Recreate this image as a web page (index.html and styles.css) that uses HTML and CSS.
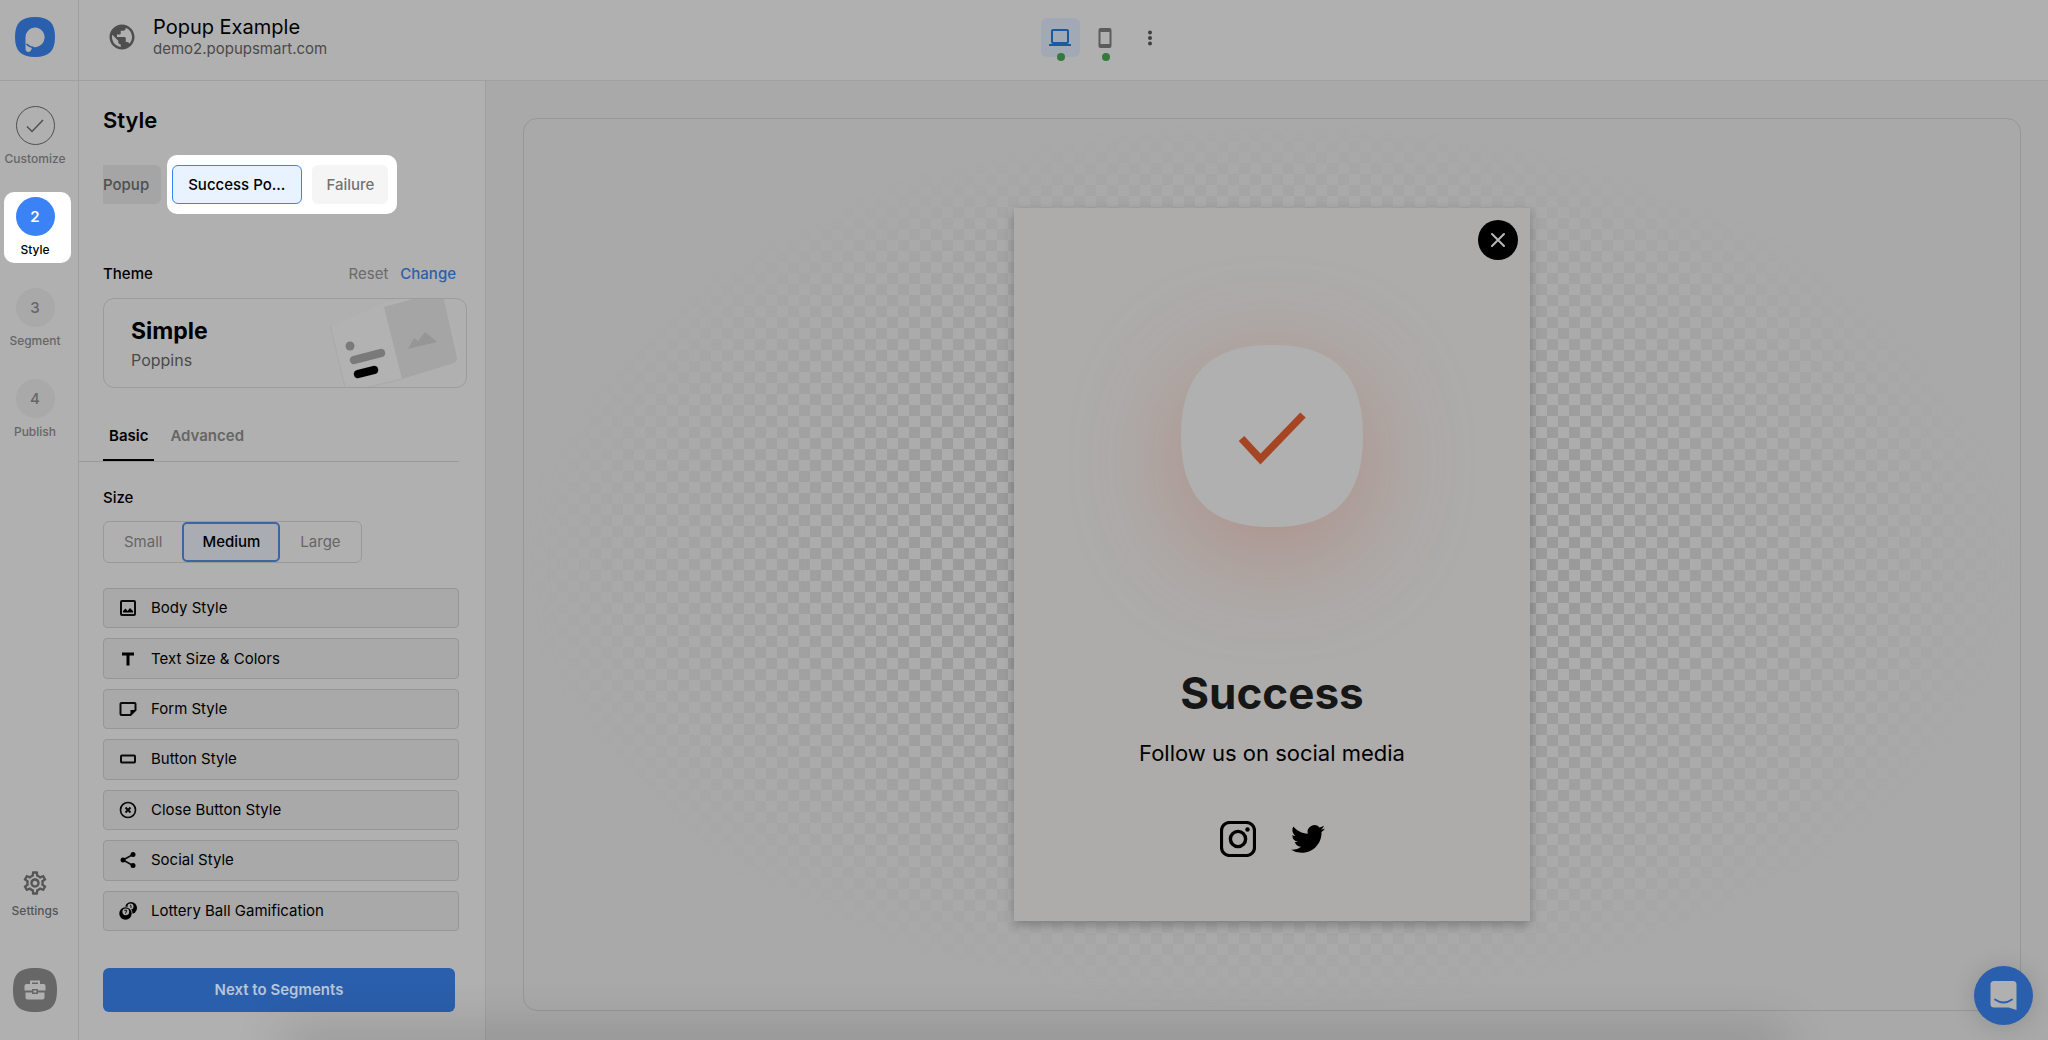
FILE: index.html
```html
<!DOCTYPE html>
<html lang="en">
  <head>
    <meta charset="UTF-8" />
    <meta name="viewport" content="width=device-width, initial-scale=1.0" />
    <title>Popup Example</title>
    <link rel="stylesheet" href="styles.css">
  </head>
  <body>
    <div class="app">
      <nav class="rail">
        <a class="logo" href="#" aria-label="Home">
          <svg width="40" height="40" viewBox="0 0 40 40">
            <path d="M20 0C34 0 40 6 40 20S34 40 20 40 0 34 0 20 6 0 20 0z" fill="#2a5fad" />
            <path d="M20 10.500a9.800 9.800 0 1 1-3 19.200c-.2 2.800-1.300 5.300-3.500 5.300-2 0-3-1.300-3-3.500V20.500a9.800 9.800 0 0 1 9.500-10z" fill="#b0b0b0" />
            <path d="M11.500 27q2.500 2.800 6.500 3.300" stroke="#2a5fad" stroke-width="1.800" fill="none" />
          </svg>
        </a>
        <div class="steps">
          <button class="step done">
            <span class="circle">
              <svg width="20" height="20" viewBox="0 0 20 20" fill="none" stroke="#4f4f4f" stroke-width="1.500"><path d="M2 10.500l5 5L18 4" /></svg>
            </span>
            Customize
          </button>
          <button class="step active"><span class="circle">2</span>Style</button>
          <button class="step"><span class="circle">3</span>Segment</button>
          <button class="step"><span class="circle">4</span>Publish</button>
        </div>
        <button class="settings">
          <svg width="28" height="28" viewBox="0 0 24 24" fill="#555"><path d="M19.430 12.980c.04-.32.07-.64.07-.98s-.03-.66-.07-.98l2.110-1.650c.19-.15.24-.42.120-.64l-2-3.460c-.09-.16-.26-.25-.44-.25-.06 0-.12.010-.17.030l-2.490 1c-.52-.4-1.080-.73-1.690-.98l-.38-2.650C14.460 2.180 14.250 2 14 2h-4c-.25 0-.46.180-.49.420l-.38 2.650c-.61.250-1.170.590-1.690.980l-2.490-1c-.06-.02-.12-.03-.18-.03-.17 0-.34.090-.43.250l-2 3.460c-.13.220-.07.490.12.640l2.110 1.650c-.04.320-.07.650-.07.980s.03.660.07.980l-2.110 1.650c-.19.150-.24.420-.12.640l2 3.460c.09.160.26.250.44.250.06 0 .12-.01.170-.03l2.490-1c.52.400 1.080.730 1.690.980l.38 2.650c.03.240.24.420.49.420h4c.25 0 .46-.18.490-.42l.38-2.650c.61-.25 1.170-.59 1.690-.98l2.490 1c.06.020.12.030.18.030.17 0 .34-.09.430-.25l2-3.460c.12-.22.07-.49-.12-.64l-2.110-1.650zm-1.980-1.710c.04.310.05.520.05.730s-.02.430-.05.730l-.14 1.130.89.700 1.080.840-.7 1.210-1.270-.51-1.040-.42-.9.680c-.43.320-.84.560-1.250.730l-1.060.430-.16 1.130-.2 1.350h-1.400l-.19-1.350-.16-1.130-1.060-.43c-.43-.18-.83-.41-1.230-.71l-.91-.7-1.060.430-1.270.510-.7-1.210 1.080-.84.890-.7-.14-1.130c-.03-.31-.05-.54-.05-.74s.02-.43.050-.73l.14-1.130-.89-.7-1.080-.84.700-1.210 1.270.510 1.040.420.900-.68c.43-.32.840-.56 1.250-.73l1.060-.43.160-1.130.2-1.350h1.390l.19 1.350.16 1.130 1.060.430c.43.180.83.410 1.230.710l.91.700 1.060-.43 1.270-.51.700 1.210-1.070.85-.89.700.14 1.130zM12 8c-2.210 0-4 1.790-4 4s1.790 4 4 4 4-1.790 4-4-1.790-4-4-4zm0 6c-1.100 0-2-.9-2-2s.9-2 2-2 2 .9 2 2-.9 2-2 2z" /></svg>
          Settings
        </button>
        <button class="toolbox" aria-label="Toolbox">
          <svg width="44" height="44" viewBox="0 0 44 44">
            <path d="M22 0C38 0 44 6 44 22S38 44 22 44 0 38 0 22 6 0 22 0z" fill="#676767" />
            <path d="M18 16v-2.500h8V16" fill="none" stroke="#b0b0b0" stroke-width="2" />
            <path d="M13.500 16h17a2 2 0 0 1 2 2v4.500H25V21h-6v1.500h-7.500V18a2 2 0 0 1 2-2zM12.500 24.500H19V26h6v-1.500h6.500v5a2 2 0 0 1-2 2h-15a2 2 0 0 1-2-2zM20.500 22.500h3v2h-3z" fill="#b0b0b0" />
          </svg>
        </button>
      </nav>

      <header class="topbar">
        <div class="site">
          <svg width="30" height="30" viewBox="0 0 24 24" fill="#4e4e4e"><path d="M12 2C6.480 2 2 6.480 2 12s4.480 10 10 10 10-4.480 10-10S17.520 2 12 2zm-1 17.930c-3.950-.49-7-3.850-7-7.930 0-.62.080-1.210.21-1.790L9 15v1c0 1.100.9 2 2 2v1.930zm6.900-2.540c-.26-.81-1-1.390-1.900-1.390h-1v-3c0-.55-.45-1-1-1H8v-2h2c.55 0 1-.45 1-1V7h2c1.100 0 2-.9 2-2v-.41c2.930 1.190 5 4.060 5 7.410 0 2.080-.8 3.970-2.100 5.390z" /></svg>
          <div>
            <h1>Popup Example</h1>
            <p>demo2.popupsmart.com</p>
          </div>
        </div>
        <div class="devices">
          <button class="device selected" aria-label="Desktop">
            <svg width="22" height="22" viewBox="0 0 22 22"><rect x="3" y="3" width="16" height="13" rx="1" fill="none" stroke="#1c5a9f" stroke-width="2" /><path d="M0 17h22v2H0z" fill="#1c5a9f" /></svg>
            <span class="dot"></span>
          </button>
          <button class="device" aria-label="Mobile">
            <svg width="22" height="22" viewBox="0 0 22 22" fill="#5c5c5c"><path fill-rule="evenodd" d="M6.500 1h9a2 2 0 0 1 2 2v16a2 2 0 0 1-2 2h-9a2 2 0 0 1-2-2V3a2 2 0 0 1 2-2zM6.500 5v12h9V5z" /></svg>
            <span class="dot"></span>
          </button>
          <button class="device" aria-label="More">
            <svg width="22" height="22" viewBox="0 0 22 22" fill="#3f3f3f"><circle cx="11" cy="5.500" r="2" /><circle cx="11" cy="11" r="2" /><circle cx="11" cy="16.500" r="2" /></svg>
          </button>
        </div>
      </header>

      <aside class="panel">
        <h2>Style</h2>
        <div class="pages">
          <button class="page cut">Popup</button>
          <div class="spotlight">
            <button class="page current">Success Po...</button>
            <button class="page light">Failure</button>
          </div>
        </div>

        <div class="theme-head">
          <h3>Theme</h3>
          <a class="reset" href="#">Reset</a>
          <a class="change" href="#">Change</a>
        </div>
        <div class="theme-card">
          <div>
            <strong>Simple</strong>
            <p>Poppins</p>
          </div>
          <svg width="136" height="88" viewBox="0 0 136 88">
            <path d="M0 28L15 88H38L128 64Q131 62 130 59L112 -8L53 4z" fill="#b2b2b2" />
            <path d="M0 26L15 88M38 88L73 80" stroke="#a9a9a9" fill="none" />
            <path d="M54 8L112 -8L127 58Q128 62 124 64L72 80z" fill="#a5a5a5" />
            <path d="M78 50L84 39L88 42L95 33L107 43z" fill="#969696" />
            <circle cx="20" cy="47" r="4.500" fill="#7a7a7a" />
            <path d="M24 61L51 54" stroke="#7a7a7a" stroke-width="8.500" stroke-linecap="round" />
            <path d="M28 75L44 71" stroke="#000" stroke-width="8.500" stroke-linecap="round" />
          </svg>
        </div>

        <div class="tabs">
          <button class="tab on">Basic</button>
          <button class="tab">Advanced</button>
        </div>

        <h3>Size</h3>
        <div class="sizes">
          <button>Small</button>
          <button class="picked">Medium</button>
          <button>Large</button>
        </div>

        <div class="options">
          <button class="option">
            <svg width="18" height="18" viewBox="0 0 18 18"><rect x="2" y="2" width="14" height="14" rx="1" fill="none" stroke="#0a0a0a" stroke-width="2" /><path d="M4 13.500V12l2.500-2.500L8.500 12l2.500-3L14 12v1.500z" /></svg>
            Body Style
          </button>
          <button class="option">
            <svg width="18" height="18" viewBox="0 0 18 18"><path d="M3 2.500h12v3h-4.500v10h-3v-10H3z" /></svg>
            Text Size &amp; Colors
          </button>
          <button class="option">
            <svg width="18" height="18" viewBox="0 0 18 18"><path d="M11.500 15H2.500A1 1 0 0 1 1.500 14V4A1 1 0 0 1 2.500 3H15.500A1 1 0 0 1 16.500 4V10z" fill="none" stroke="#0a0a0a" stroke-width="2" /><path d="M11.500 15V10H16.500z" /></svg>
            Form Style
          </button>
          <button class="option">
            <svg width="18" height="18" viewBox="0 0 18 18"><rect x="2" y="5.500" width="14" height="7" rx="1" fill="none" stroke="#0a0a0a" stroke-width="2" /></svg>
            Button Style
          </button>
          <button class="option">
            <svg width="18" height="18" viewBox="0 0 18 18" fill="none" stroke="#0a0a0a"><circle cx="9" cy="9" r="7.500" stroke-width="1.700" /><path d="M6.500 6.500l5 5M11.500 6.500l-5 5" stroke-width="2" /></svg>
            Close Button Style
          </button>
          <button class="option">
            <svg width="18" height="18" viewBox="0 0 18 18"><path d="M14 3.500L4 9L14 14.500" fill="none" stroke="#0a0a0a" stroke-width="1.600" /><circle cx="14" cy="3.500" r="2.500" /><circle cx="4" cy="9" r="2.500" /><circle cx="14" cy="14.500" r="2.500" /></svg>
            Social Style
          </button>
          <button class="option">
            <svg width="18" height="18" viewBox="0 0 18 18"><circle cx="12" cy="6" r="6" /><circle cx="11.500" cy="4.500" r="3" fill="#a9a9a9" /><path d="M11 3l1 .5V6" fill="none" stroke="#0a0a0a" /><circle cx="6.500" cy="11.500" r="7" fill="#a9a9a9" /><circle cx="6.500" cy="11.500" r="6.200" /><circle cx="6.800" cy="9.800" r="3.400" fill="#a9a9a9" /><path d="M5.300 8.300h2.500L6.500 11.500" fill="none" stroke="#0a0a0a" /></svg>
            Lottery Ball Gamification
          </button>
        </div>
        <button class="next">Next to Segments</button>
      </aside>

      <main class="stage">
        <div class="canvas">
          <section class="popup">
            <button class="close" aria-label="Close">
              <svg width="18" height="18" viewBox="0 0 18 18" fill="none" stroke="#b8b8b8" stroke-width="2"><path d="M3 3l12 12M15 3L3 15" stroke-linecap="round" /></svg>
            </button>
            <svg class="badge" width="182" height="182" viewBox="0 0 182 182">
              <path d="M91 0C153 0 182 29 182 91S153 182 91 182 0 153 0 91 29 0 91 0z" fill="#b0b0b0" />
              <path d="M60.500 93.500L79.500 114L122 70" fill="none" stroke="#a64524" stroke-width="7.500" />
            </svg>
            <h2>Success</h2>
            <p>Follow us on social media</p>
            <div class="social">
              <a href="#" aria-label="Instagram">
                <svg width="36" height="36" viewBox="0 0 36 36" fill="none" stroke="#000"><rect x="1.500" y="1.500" width="33" height="33" rx="8" stroke-width="3.200" /><circle cx="18" cy="18" r="7.600" stroke-width="3.400" /><circle cx="27.500" cy="8.500" r="2.200" fill="#000" stroke="none" /></svg>
              </a>
              <a href="#" aria-label="Twitter">
                <svg width="34" height="34" viewBox="0 0 24 24"><path d="M23.950 4.570a10 10 0 0 1-2.820.770 4.960 4.960 0 0 0 2.160-2.720c-.95.550-2 .950-3.130 1.180a4.920 4.920 0 0 0-8.380 4.480C7.690 8.100 4.070 6.130 1.640 3.160a4.820 4.820 0 0 0-.67 2.480c0 1.710.870 3.210 2.190 4.100a4.900 4.900 0 0 1-2.230-.62v.06a4.920 4.920 0 0 0 3.950 4.830 5 5 0 0 1-2.210.080 4.940 4.940 0 0 0 4.600 3.420A9.870 9.870 0 0 1 0 19.540a14 14 0 0 0 7.550 2.210c9.050 0 14-7.500 14-13.980 0-.21 0-.42-.02-.63a9.940 9.940 0 0 0 2.460-2.550z" /></svg>
              </a>
            </div>
          </section>
        </div>
      </main>
    </div>

    <button class="chat" aria-label="Open chat">
      <svg width="28" height="32" viewBox="0 0 28 32"><path d="M4 1h19a3.500 3.500 0 0 1 3.500 3.500V30l-8-2.500H4A3.500 3.500 0 0 1 .5 24V4.500A3.500 3.500 0 0 1 4 1z" fill="#b0b0b0" /><path d="M5 19.500q8.500 6 17 0" fill="none" stroke="#2a5fad" stroke-width="1.800" stroke-linecap="round" /></svg>
    </button>
  </body>
</html>
```
FILE: styles.css
```css
* {
  box-sizing: border-box;
}
body {
  margin: 0;
  font-family: Inter, "Liberation Sans", sans-serif;
  font-size: 15px;
  line-height: 20px;
  color: #000;
  background: #b0b0b0;
}
/* soft shade along the bottom edge */
body::after {
  content: "";
  position: fixed;
  left: 14%;
  right: 13%;
  bottom: -10px;
  height: 10px;
  box-shadow: 0 0 50px 4px rgba(0, 0, 0, 0.3);
}
h1, h2, h3, p {
  margin: 0;
}
button {
  font: inherit;
  color: inherit;
  background: none;
  border: none;
  padding: 0;
  cursor: pointer;
}
a {
  text-decoration: none;
}
svg {
  display: block;
  flex: none;
}
.app {
  display: grid;
  grid-template-columns: 79px 407px 1fr;
  grid-template-rows: 81px 1fr;
  min-height: 100vh;
}

/* Left rail */
.rail {
  grid-row: 1 / 3;
  display: flex;
  flex-direction: column;
  border-right: 1px solid #a0a0a0;
  padding-bottom: 28px;
}
.logo {
  height: 81px;
  padding: 17px 15px;
  border-bottom: 1px solid #a0a0a0;
}
.steps {
  display: flex;
  flex-direction: column;
  gap: 20px;
  padding: 20px 7px 0 4px;
}
.step {
  display: flex;
  flex-direction: column;
  align-items: center;
  height: 71px;
  padding: 5px 5px 0 0;
  border-radius: 10px;
  font-size: 12px;
  font-weight: 500;
  line-height: 16px;
  color: #666;
}
.circle {
  display: flex;
  align-items: center;
  justify-content: center;
  width: 39px;
  height: 39px;
  margin-bottom: 6px;
  border-radius: 50%;
  background: #a9a9a9;
  font-size: 15px;
}
.done .circle {
  background: none;
  border: 1px solid #4f4f4f;
}
.step.active {
  background: #fff;
  color: #000;
}
.active .circle {
  background: #3b82f6;
  color: #fff;
  font-weight: 600;
}
.settings {
  display: flex;
  flex-direction: column;
  align-items: center;
  gap: 6px;
  width: 70px;
  margin-top: auto;
  font-size: 12px;
  font-weight: 500;
  line-height: 16px;
  color: #555;
}
.toolbox {
  width: 44px;
  margin: 49px 0 0 13px;
}

/* Top bar */
.topbar {
  grid-column: 2 / 4;
  display: grid;
  grid-template-columns: 23fr auto 21fr;
  border-bottom: 1px solid #a0a0a0;
}
.site {
  display: flex;
  gap: 16px;
  padding: 15px 0 0 28px;
}
.site svg {
  margin-top: 7px;
}
.site h1 {
  font-size: 20px;
  font-weight: 400;
  line-height: 24px;
}
.site p {
  color: #4a4a4a;
}
.devices {
  display: flex;
  gap: 6px;
  padding-top: 18px;
}
.device {
  position: relative;
  display: flex;
  align-items: center;
  justify-content: center;
  width: 39px;
  height: 39px;
  border-radius: 6px;
}
.device.selected {
  background: #a1a9b5;
}
.dot {
  position: absolute;
  bottom: -4px;
  left: 16px;
  width: 8px;
  height: 8px;
  border-radius: 50%;
  background: #347a3c;
}

/* Style panel */
.panel {
  display: flex;
  flex-direction: column;
  border-right: 1px solid #a0a0a0;
  padding: 25px 26px 28px 24px;
}
.panel h2 {
  font-size: 22px;
  font-weight: 600;
  line-height: 28px;
}
.panel h3 {
  font-size: 15px;
  font-weight: 500;
}
.pages {
  display: flex;
  align-items: center;
  gap: 6px;
  margin-top: 21px;
  overflow: hidden;
}
.page {
  height: 39px;
  padding: 0 14px;
  border-radius: 6px;
  background: #a5a5a5;
  color: #4f4f4f;
  font-weight: 500;
}
.page.cut {
  padding: 0 12px 0 0;
  border-radius: 0 6px 6px 0;
}
.spotlight {
  display: flex;
  gap: 10px;
  padding: 10px 9px 10px 5px;
  border-radius: 10px;
  background: #fff;
}
.page.current {
  padding: 0 16px 0 15px;
  border: 1px solid #3b82f6;
  background: #e9f3ff;
  color: #000;
}
.page.light {
  background: #f5f5f5;
  color: #737373;
}
.theme-head {
  display: flex;
  gap: 12px;
  margin: 50px 3px 14px 0;
}
.theme-head h3 {
  margin-right: auto;
}
.reset {
  color: #6a6a6a;
}
.change {
  color: #2a5fad;
  font-weight: 500;
}
.theme-card {
  display: flex;
  justify-content: space-between;
  height: 90px;
  margin-right: -8px;
  padding-left: 27px;
  border: 1px solid #9c9c9c;
  border-radius: 11px;
  overflow: hidden;
}
.theme-card strong {
  display: block;
  margin-top: 16px;
  font-size: 23px;
  font-weight: 700;
  line-height: 32px;
}
.theme-card p {
  margin-top: 3px;
  font-size: 16px;
  color: #4a4a4a;
}
.tabs {
  display: flex;
  gap: 10px;
  margin: 28px 0 26px -24px;
  padding-left: 24px;
  border-bottom: 1px solid #999;
}
.tab {
  height: 45px;
  padding: 0 6px 6px;
  font-weight: 600;
  color: #666;
}
.tab.on {
  border-bottom: 2px solid #000;
  padding-bottom: 4px;
  color: #000;
}
.sizes {
  display: flex;
  align-self: flex-start;
  height: 42px;
  margin: 13px 0 25px;
  border: 1px solid #999;
  border-radius: 6px;
}
.sizes button {
  padding: 0 20px;
  color: #666;
}
.sizes .picked {
  padding: 0 18px;
  border: 2px solid #3d659f;
  border-radius: 5px;
  background: #a9adb3;
  color: #000;
  font-weight: 500;
}
.options {
  flex: 1;
  display: grid;
  gap: 10px;
}
.option {
  display: flex;
  align-items: center;
  gap: 14px;
  min-height: 40px;
  padding: 0 15px;
  border: 1px solid #969696;
  border-radius: 4px;
  background: #a9a9a9;
  text-align: left;
}
.next {
  height: 44px;
  margin: 37px 4px 0 0;
  border-radius: 6px;
  background: #2a5fad;
  color: #b9c5d8;
  font-weight: 600;
}

/* Preview */
.stage {
  display: flex;
  padding: 37px 27px 29px 37px;
  background: #a9a9a9;
}
.canvas {
  position: relative;
  flex: 1;
  display: flex;
  align-items: center;
  justify-content: center;
  border: 1px solid #979797;
  border-radius: 14px;
}
.canvas::before {
  content: "";
  position: absolute;
  inset: 0;
  background: repeating-conic-gradient(#9a9a9a 0 25%, #adadad 0 50%) 0 0 / 22px 22px;
  mask-image: radial-gradient(closest-side, #000 40%, transparent);
}
.popup {
  position: relative;
  display: flex;
  flex-direction: column;
  align-items: center;
  width: 516px;
  padding: 137px 20px 64px;
  background: #adacaa;
  box-shadow: 0 4px 10px rgba(0, 0, 0, 0.25);
}
.close {
  position: absolute;
  top: 12px;
  right: 12px;
  display: flex;
  align-items: center;
  justify-content: center;
  width: 40px;
  height: 40px;
  border-radius: 50%;
  background: #000;
}
.badge {
  overflow: visible;
  filter: drop-shadow(0 24px 54px rgba(180, 100, 85, 0.45));
}
.popup h2 {
  margin-top: 136px;
  font-size: 44px;
  font-weight: 700;
  line-height: 60px;
  color: #161616;
}
.popup p {
  margin-top: 14px;
  font-size: 22px;
  line-height: 32px;
}
.social {
  display: flex;
  align-items: center;
  gap: 35px;
  margin-top: 52px;
}
.chat {
  position: fixed;
  right: 15px;
  bottom: 15px;
  display: flex;
  align-items: center;
  justify-content: center;
  width: 59px;
  height: 59px;
  border-radius: 50%;
  background: #2a5fad;
  box-shadow: 0 2px 24px rgba(0, 0, 0, 0.15);
}
```
